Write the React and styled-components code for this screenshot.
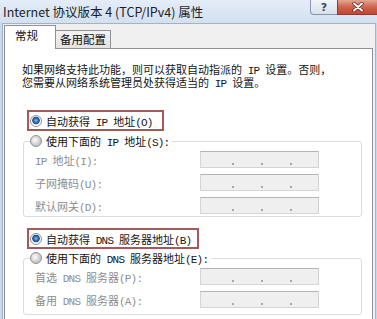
import styled, { createGlobalStyle } from 'styled-components';

const GlobalStyle = createGlobalStyle`
    html, body {
        margin: 0;
        padding: 0;
        background: #f0f0f0;
    }
    * {
        box-sizing: border-box;
    }
`;

const cjk = `"Noto Sans CJK SC", "Noto Sans", sans-serif`;

const Window = styled.div`
    width: 377px;
    height: 319px;
    overflow: hidden;
    display: flex;
    flex-direction: column;
    background: #c8d9ed;
    font-family: ${cjk};
`;

const TitleBar = styled.div`
    height: 23px;
    flex-shrink: 0;
    display: flex;
    align-items: flex-start;
    background: linear-gradient(#e4edf8, #d2e0f0);
`;

const Title = styled.div`
    padding: 3px 0 0 3px;
    font-size: 12.5px;
    line-height: 17px;
    color: #1e1e1e;
    white-space: nowrap;
`;

const Controls = styled.div`
    margin-left: auto;
    display: flex;
`;

const HelpButton = styled.div`
    width: 27px;
    height: 15px;
    border: 1px solid #8797ad;
    border-top: none;
    border-right: none;
    border-radius: 0 0 0 4px;
    background: linear-gradient(#f2f5fa, #d6e0ec);
    display: flex;
    align-items: center;
    justify-content: center;
    font-family: "DejaVu Sans", sans-serif;
    font-size: 11px;
    font-weight: bold;
    color: #34465e;
`;

const CloseButton = styled.div`
    width: 40px;
    height: 15px;
    border: 1px solid #8b3c30;
    border-top: none;
    border-right: none;
    background: linear-gradient(#e4a795, #d0634f 50%, #c2452f);
    display: flex;
    align-items: center;
    justify-content: center;
`;

const Body = styled.div`
    flex: 1;
    margin: 0 1px 0 2px;
    border: 1px solid #a4b2c4;
    border-bottom: none;
    background: #f0f0f0;
    padding: 1px 2px 0 1px;
    display: flex;
    flex-direction: column;
`;

const TabStrip = styled.div`
    height: 23px;
    display: flex;
    align-items: flex-end;
    position: relative;
    z-index: 1;
`;

const Tab = styled.div`
    height: ${(p) => (p.$active ? '24px' : '18px')};
    margin-bottom: ${(p) => (p.$active ? '-1px' : '0')};
    width: ${(p) => p.$width}px;
    padding-left: ${(p) => (p.$active ? '10px' : '4px')};
    border: 1px solid #8e9198;
    border-bottom: none;
    border-left: ${(p) => (p.$active ? '1px solid #8e9198' : 'none')};
    background: ${(p) =>
        p.$active ? '#ffffff' : 'linear-gradient(#f3f3f3, #e2e2e2)'};
    font-size: 11.5px;
    line-height: ${(p) => (p.$active ? '19px' : '16px')};
    color: #111;
`;

const Panel = styled.div`
    flex: 1;
    background: #ffffff;
    border: 1px solid #8e9198;
    border-bottom: none;
`;

// SimSun-style half-width Latin runs inside CJK text
const Latin = styled.span`
    font-family: "Liberation Mono", monospace;
    font-size: 11px;
    letter-spacing: -0.8px;
    line-height: 0;
`;

const mixed = (text) =>
    text
        .split(/([\x20-\x7e]+)/)
        .filter(Boolean)
        .map((part, i) =>
            /^[\x20-\x7e]+$/.test(part) ? (
                <Latin key={i}>{part}</Latin>
            ) : (
                <span key={i}>{part}</span>
            )
        );

const Intro = styled.p`
    margin: 14px 0 0 17px;
    font-size: 11px;
    line-height: 13px;
    color: #141414;
    white-space: nowrap;
`;

const Highlight = styled.div`
    margin: ${(p) => p.$top}px 0 0 22px;
    width: ${(p) => p.$width}px;
    height: 21px;
    border: 2px solid #a45a58;
    padding-left: 1px;
    display: flex;
    align-items: center;
`;

const RadioRow = styled.label`
    display: flex;
    align-items: center;
    gap: 4px;
    font-size: 11px;
    line-height: 16px;
    color: #141414;
    white-space: nowrap;
`;

const Circle = styled.span`
    width: 12px;
    height: 12px;
    flex-shrink: 0;
    border-radius: 50%;
    border: 1px solid #8c8f94;
    background: ${(p) =>
        p.$checked
            ? 'radial-gradient(circle at 50% 45%, #9cc8f0 0, #3f7fc6 1.6px, #1d4a8c 3.4px, #ffffff 4.2px)'
            : 'radial-gradient(circle at 40% 40%, #fbfbfb 0, #e0e0e0 3px, #c9c9c9 5px)'};
`;

const Group = styled.fieldset`
    margin: ${(p) => p.$top}px 0 0 18px;
    width: 339px;
    border: 1px solid #d6dde3;
    border-radius: 3px;
    padding: 0 0 ${(p) => p.$bottom}px 6px;
    min-width: 0;
`;

const Legend = styled.legend`
    padding: 0 3px 0 0;
`;

const FieldList = styled.div`
    display: flex;
    flex-direction: column;
    gap: 6px;
    padding: 2px 0 0 5px;
`;

const FieldRow = styled.div`
    display: flex;
    align-items: center;
`;

const FieldLabel = styled.span`
    width: 165px;
    font-size: 11px;
    line-height: 16px;
    color: #8d8d8d;
    white-space: nowrap;
`;

const IpBox = styled.div`
    width: 119px;
    height: 17px;
    background: #efefef;
    border: 1px solid #d4d4d4;
    border-top-color: #b4b4b4;
    display: flex;
    align-items: flex-end;
    padding: 0 0 2px 31px;
    gap: 27px;
`;

const IpDot = styled.span`
    width: 2px;
    height: 2px;
    background: #a8a8a8;
`;

const Radio = ({ checked, label }) => (
    <RadioRow>
        <Circle $checked={checked} />
        <span>{mixed(label)}</span>
    </RadioRow>
);

const Field = ({ label }) => (
    <FieldRow>
        <FieldLabel>{mixed(label)}</FieldLabel>
        <IpBox>
            <IpDot />
            <IpDot />
            <IpDot />
        </IpBox>
    </FieldRow>
);

const App = () => {
    return (
        <>
            <GlobalStyle />
            <Window>
                <TitleBar>
                    <Title>Internet 协议版本 4 (TCP/IPv4) 属性</Title>
                    <Controls>
                        <HelpButton>?</HelpButton>
                        <CloseButton>
                            <svg width="14" height="10" viewBox="0 0 14 10">
                                <path
                                    d="M3 1.5 L11 8.5 M11 1.5 L3 8.5"
                                    stroke="#5a1f16"
                                    strokeWidth="3.4"
                                    strokeLinecap="round"
                                />
                                <path
                                    d="M3 1.5 L11 8.5 M11 1.5 L3 8.5"
                                    stroke="#ffffff"
                                    strokeWidth="2"
                                    strokeLinecap="round"
                                />
                            </svg>
                        </CloseButton>
                    </Controls>
                </TitleBar>
                <Body>
                    <TabStrip>
                        <Tab $active $width={52}>
                            常规
                        </Tab>
                        <Tab $width={55}>备用配置</Tab>
                    </TabStrip>
                    <Panel>
                        <Intro>
                            {mixed('如果网络支持此功能，则可以获取自动指派的 IP 设置。否则，')}
                            <br />
                            {mixed('您需要从网络系统管理员处获得适当的 IP 设置。')}
                        </Intro>
                        <Highlight $top={21} $width={137}>
                            <Radio checked label="自动获得 IP 地址(O)" />
                        </Highlight>
                        <Group $top={2} $bottom={2}>
                            <Legend>
                                <Radio label="使用下面的 IP 地址(S):" />
                            </Legend>
                            <FieldList>
                                <Field label="IP 地址(I):" />
                                <Field label="子网掩码(U):" />
                                <Field label="默认网关(D):" />
                            </FieldList>
                        </Group>
                        <Highlight $top={11} $width={172}>
                            <Radio checked label="自动获得 DNS 服务器地址(B)" />
                        </Highlight>
                        <Group $top={1} $bottom={6}>
                            <Legend>
                                <Radio label="使用下面的 DNS 服务器地址(E):" />
                            </Legend>
                            <FieldList>
                                <Field label="首选 DNS 服务器(P):" />
                                <Field label="备用 DNS 服务器(A):" />
                            </FieldList>
                        </Group>
                    </Panel>
                </Body>
            </Window>
        </>
    );
};

export default App;
